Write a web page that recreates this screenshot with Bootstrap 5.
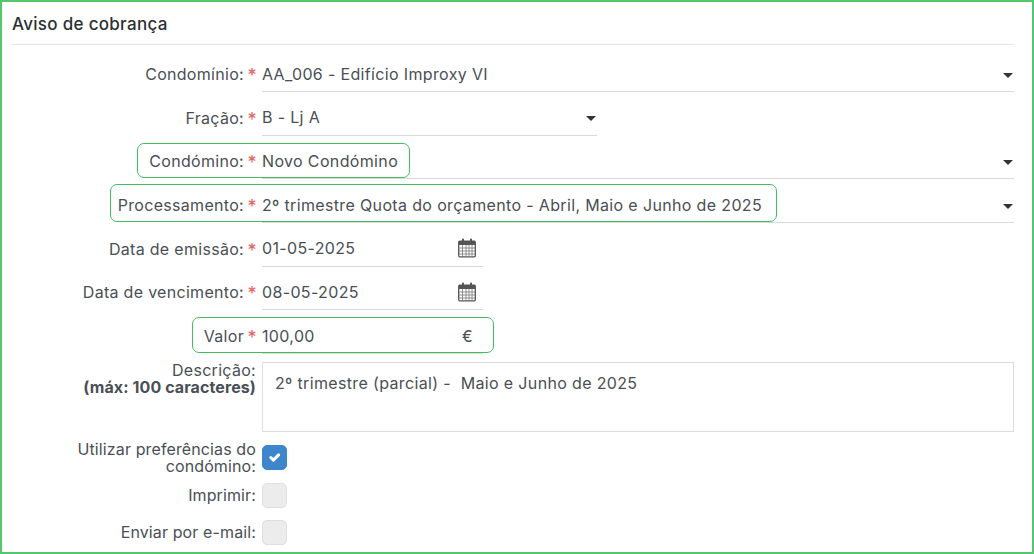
<!DOCTYPE html>
<html lang="pt">
<head>
<meta charset="utf-8">
<title>Aviso de cobrança</title>
<link href="https://cdn.jsdelivr.net/npm/bootstrap@5.3.0/dist/css/bootstrap.min.css" rel="stylesheet">
<style>
html,body{height:100%;overflow:hidden;background:#fff}
body{font-family:Inter,"Liberation Sans",sans-serif;font-size:16px;color:#4a4f55;letter-spacing:.35px}
.frame{height:554px;border:2px solid #52c76c;padding:0 18px 0 10px;overflow:hidden}
.ttl{height:43px;border-bottom:1px solid #e6e6e6;font-size:17px;font-weight:500;color:#2b2f33;line-height:45px;letter-spacing:.3px}
.stack{padding-top:11px}
.fr{height:43.7px;position:relative}
.lab{width:232px;flex:none;text-align:right;padding-top:8px;line-height:20px;letter-spacing:.3px}
.ast{width:18px;flex:none;color:#e4605f;padding:10px 0 0 3.500px;line-height:20px;font-size:18px}
.fld.form-control{height:36px;border:0;border-bottom:1px solid #d9d9d9;border-radius:0;padding:0;font-size:16px;color:#4a4f55;line-height:20px;letter-spacing:.35px;background:transparent}
.w-f{flex:1 1 auto}
.w-m{width:335px}
.w-s{width:221px}
.car{width:0;height:0;border-left:5.500px solid transparent;border-right:5.500px solid transparent;border-top:5.500px solid #333;margin:3px 1px 0 0}
.calsvg{width:18px;height:20px;margin-right:7px}
.eur{margin-right:10px}
.hl{position:absolute;border:1.5px solid #3fbf5f;border-radius:7px;pointer-events:none}
.h1x{left:125px;width:273px;top:0;height:35px}
.h2x{left:98px;width:667px;top:-3px;height:37.500px}
.h3x{left:180px;width:302px;top:-1px;height:36px}
.dr{height:77px}
.dl{line-height:17px;width:244px;text-align:right;flex:none;margin-right:6px;letter-spacing:.3px}
.dl b{letter-spacing:.1px;font-weight:700}
.ta.form-control{height:70px;border:1px solid #dcdcdc;border-radius:0;padding:10px 12px;font-size:16px;color:#4a4f55;letter-spacing:.35px;resize:none;line-height:20px}
.cr{height:37.500px}
.cl{width:244px;flex:none;text-align:right;line-height:17px;margin-right:6px;letter-spacing:.12px}
.form-check-input.cb{width:25px;height:25px;margin:0;border-radius:5px;background-color:#ececec;border:1px solid #dedede;opacity:1}
.form-check-input.cb:checked{background-color:#3d86cb;border-color:#3d86cb;background-size:15px;background-image:url("data:image/svg+xml,%3csvg xmlns='http://www.w3.org/2000/svg' viewBox='0 0 20 20'%3e%3cpath fill='none' stroke='%23fff' stroke-linecap='round' stroke-linejoin='round' stroke-width='4' d='m5 10 3.500 3.500 7-7'/%3e%3c/svg%3e")}
</style>
</head>
<body>
<div class="frame">
  <div class="ttl">Aviso de cobrança</div>
  <div class="stack">
    <div class="fr d-flex">
      <div class="lab">Condomínio:</div><div class="ast">*</div>
      <div class="fld form-control w-f d-flex justify-content-between align-items-center"><span>AA_006 - Edifício Improxy VI</span><i class="car"></i></div>
    </div>
    <div class="fr d-flex">
      <div class="lab">Fração:</div><div class="ast">*</div>
      <div class="fld form-control w-m d-flex justify-content-between align-items-center"><span>B - Lj A</span><i class="car"></i></div>
    </div>
    <div class="fr d-flex">
      <div class="lab">Condómino:</div><div class="ast">*</div>
      <div class="fld form-control w-f d-flex justify-content-between align-items-center"><span>Novo Condómino</span><i class="car"></i></div>
      <div class="hl h1x"></div>
    </div>
    <div class="fr d-flex">
      <div class="lab">Processamento:</div><div class="ast">*</div>
      <div class="fld form-control w-f d-flex justify-content-between align-items-center"><span>2º trimestre Quota do orçamento - Abril, Maio e Junho de 2025</span><i class="car"></i></div>
      <div class="hl h2x"></div>
    </div>
    <div class="fr d-flex">
      <div class="lab">Data de emissão:</div><div class="ast">*</div>
      <div class="fld form-control w-s d-flex justify-content-between align-items-center"><span>01-05-2025</span>
        <svg class="calsvg" viewBox="0 0 18 20"><rect x=".7" y="3.200" width="16.600" height="15.600" rx="1" fill="#fff" stroke="#555" stroke-width="1.300"/><rect x="1" y="3" width="16" height="4" fill="#555"/><path d="M1 10h16M1 13h16M1 16h16M4.500 7v12M8 7v12M11 7v12M14 7v12" stroke="#777" stroke-width=".8"/><path d="M5 1.500v3M13 1.500v3" stroke="#555" stroke-width="2" stroke-linecap="round"/></svg></div>
    </div>
    <div class="fr d-flex">
      <div class="lab">Data de vencimento:</div><div class="ast">*</div>
      <div class="fld form-control w-s d-flex justify-content-between align-items-center"><span>08-05-2025</span>
        <svg class="calsvg" viewBox="0 0 18 20"><rect x=".7" y="3.200" width="16.600" height="15.600" rx="1" fill="#fff" stroke="#555" stroke-width="1.300"/><rect x="1" y="3" width="16" height="4" fill="#555"/><path d="M1 10h16M1 13h16M1 16h16M4.500 7v12M8 7v12M11 7v12M14 7v12" stroke="#777" stroke-width=".8"/><path d="M5 1.500v3M13 1.500v3" stroke="#555" stroke-width="2" stroke-linecap="round"/></svg></div>
    </div>
    <div class="fr d-flex">
      <div class="lab">Valor</div><div class="ast">*</div>
      <div class="fld form-control w-s d-flex justify-content-between align-items-center"><span>100,00</span><span class="eur">€</span></div>
      <div class="hl h3x"></div>
    </div>
    <div class="dr d-flex">
      <div class="dl"><span class="d-block">Descrição:</span><b class="d-block">(máx: 100 caracteres)</b></div>
      <textarea class="form-control ta w-f">2º trimestre (parcial) -  Maio e Junho de 2025</textarea>
    </div>
    <div class="cr d-flex align-items-center">
      <div class="cl">Utilizar preferências do condómino:</div>
      <input class="form-check-input cb" type="checkbox" checked aria-label="Utilizar preferências do condómino">
    </div>
    <div class="cr d-flex align-items-center">
      <div class="cl">Imprimir:</div>
      <input class="form-check-input cb" type="checkbox" aria-label="Imprimir">
    </div>
    <div class="cr d-flex align-items-center">
      <div class="cl">Enviar por e-mail:</div>
      <input class="form-check-input cb" type="checkbox" aria-label="Enviar por e-mail">
    </div>
  </div>
</div>
<script src="https://cdn.jsdelivr.net/npm/bootstrap@5.3.0/dist/js/bootstrap.bundle.min.js"></script>
</body>
</html>
